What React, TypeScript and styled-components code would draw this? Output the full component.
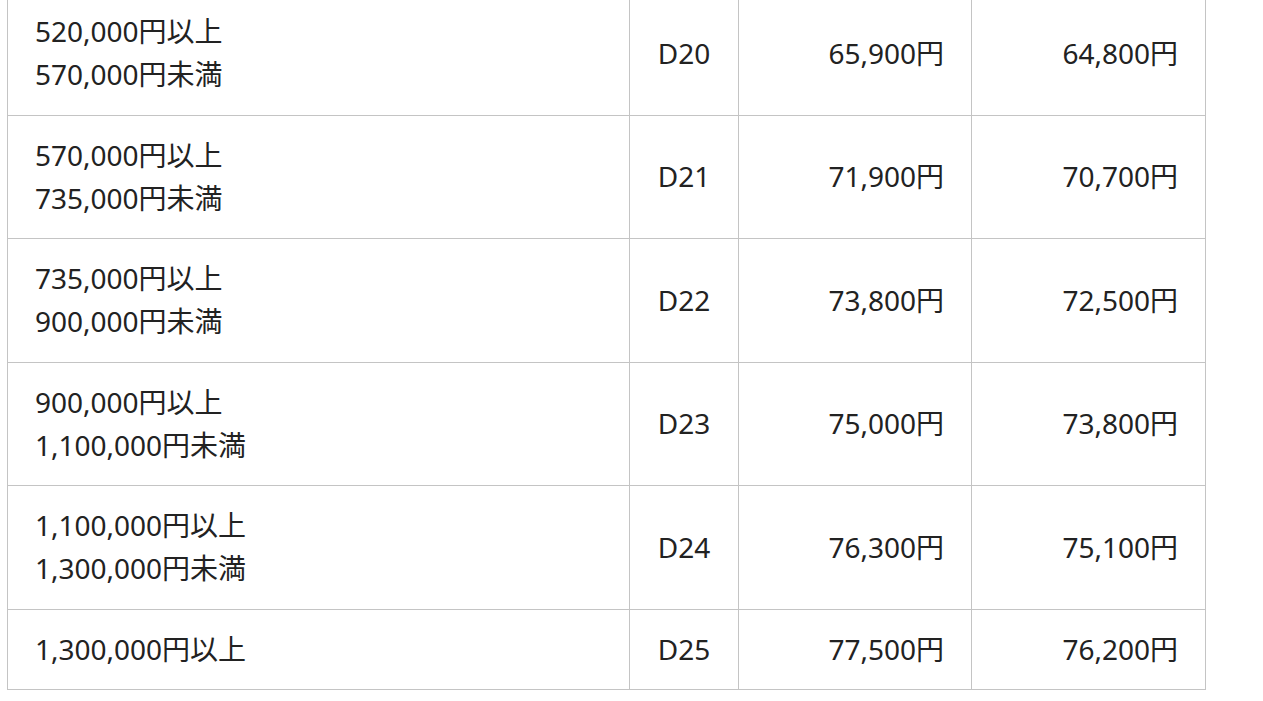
import * as React from "react";
import styled, { createGlobalStyle } from "styled-components";

const GlobalStyle = createGlobalStyle`
  html, body {
    margin: 0;
    padding: 0;
    background: #ffffff;
  }
  body {
    font-family: "Noto Sans", "Noto Sans CJK JP", sans-serif;
    color: #222222;
  }
`;

const Page = styled.div`
  width: 1263px;
  height: 701px;
  overflow: hidden;
  padding-left: 7px;
  box-sizing: border-box;
`;

const Table = styled.table`
  margin-top: -9px;
  width: 1199px;
  border-collapse: collapse;
  table-layout: fixed;
  font-size: 28px;
  line-height: 43.25px;
`;

interface ColumnProps {
    size: number;
}

const Column = styled.col<ColumnProps>`
  width: ${(props) => props.size}px;
`;

interface CellProps {
    align: "left" | "center" | "right";
}

const Cell = styled.td<CellProps>`
  border: 1px solid #c4c4c4;
  padding: 18px 27px 18px 27px;
  text-align: ${(props) => props.align};
  vertical-align: middle;
  white-space: nowrap;
`;

const Line = styled.div`
  display: block;
`;

interface Row {
    range: string[];
    grade: string;
    price: string;
    member: string;
}

const rows: Row[] = [
    { range: ["520,000円以上", "570,000円未満"], grade: "D20", price: "65,900円", member: "64,800円" },
    { range: ["570,000円以上", "735,000円未満"], grade: "D21", price: "71,900円", member: "70,700円" },
    { range: ["735,000円以上", "900,000円未満"], grade: "D22", price: "73,800円", member: "72,500円" },
    { range: ["900,000円以上", "1,100,000円未満"], grade: "D23", price: "75,000円", member: "73,800円" },
    { range: ["1,100,000円以上", "1,300,000円未満"], grade: "D24", price: "76,300円", member: "75,100円" },
    { range: ["1,300,000円以上"], grade: "D25", price: "77,500円", member: "76,200円" },
];

export default class App extends React.Component {
    render() {
        return (
            <Page>
                <GlobalStyle />
                <Table>
                    <colgroup>
                        <Column size={622} />
                        <Column size={109} />
                        <Column size={233} />
                        <Column size={234} />
                    </colgroup>
                    <tbody>
                        {rows.map((row) => (
                            <tr key={row.grade}>
                                <Cell align="left">
                                    {row.range.map((line, i) => (
                                        <Line key={i}>{line}</Line>
                                    ))}
                                </Cell>
                                <Cell align="center">{row.grade}</Cell>
                                <Cell align="right">{row.price}</Cell>
                                <Cell align="right">{row.member}</Cell>
                            </tr>
                        ))}
                    </tbody>
                </Table>
            </Page>
        );
    }
}
